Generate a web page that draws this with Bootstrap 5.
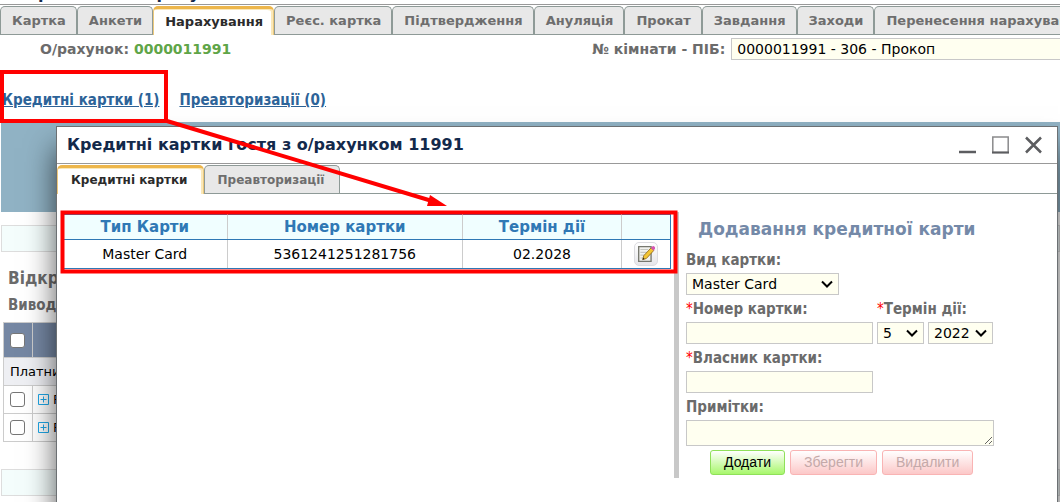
<!DOCTYPE html>
<html lang="uk">
<head>
<meta charset="utf-8">
<meta name="viewport" content="width=device-width, initial-scale=1">
<title>Кредитні картки гостя</title>
<link rel="stylesheet" href="https://cdn.jsdelivr.net/npm/bootstrap@5.3.0/dist/css/bootstrap.min.css">
<style>
  body { font-family: "DejaVu Sans", sans-serif; font-size: 12px; line-height: 16px; color: #000; background: #fff; overflow: hidden; min-height: 100vh; position: relative; }
  .strong-label { font-size: 15px; line-height: 18px; font-weight: 700; color: #6b6b6b; font-family: "DejaVu Sans Condensed", "DejaVu Sans", sans-serif; }
  .page-head { height: 5px; overflow: hidden; border-bottom: 1px solid #999; padding-left: 14px; margin-bottom: 1px; }
  .page-head h1 { font-size: 16px; line-height: 20px; font-weight: 700; color: #13294b; }
  .tabstrip { border-bottom: 1px solid #8e9a97; height: 29px; }
  .tabstrip a { flex: none; height: 28px; line-height: 28px; padding: 0 10px 0 11px; font-weight: 700; font-size: 13px; color: #6e6e6e; text-decoration: none; white-space: nowrap; background: #e8e8e8; border: 1px solid #8e9a97; border-bottom: 0; border-radius: 5px 5px 0 0; }
  .tabstrip a.active { height: 29px; background: #fff; color: #2b2b2b; border: 1px solid #ecc97c; border-top: 3px solid #edb64b; border-bottom: 0; line-height: 25px; box-shadow: inset -2px 1px 0 #fbe8b8; }
  .dialog .tabstrip a { font-size: 12px; padding: 0 15px 0 13px; }
  .fld { display: block; font-size: 14px; line-height: 20px; height: 22px; padding: 0 5px; border: 1px solid #c8c8c8; border-radius: 0; background-color: #fffff0; color: #000; }
  select.fld { appearance: none; background-image: url("data:image/svg+xml,%3Csvg xmlns='http://www.w3.org/2000/svg' viewBox='0 0 12 8'%3E%3Cpath d='M1 1.5l5 5 5-5' fill='none' stroke='%23000' stroke-width='2'/%3E%3C/svg%3E"); background-repeat: no-repeat; background-position: right 5px center; background-size: 12px 8px; }
  .account-row { height: 30px; padding: 3px 0 0 40px; }
  .account-row .strong-label { font-family: "DejaVu Sans", sans-serif; font-size: 14px; line-height: 22px; }
  .account-row b { color: #5fa548; }
  .room-group { flex: 0 0 468px; gap: 6px; }
  .room-group select.fld { background-image: none; border-right: 0; }
  .link-row { height: 57px; padding: 26px 0 0 2px; gap: 20px; }
  .link-row a { color: #2d6398; }
  .blue-band { height: 90px; background: #90b2c4; margin: 0 0 13px 1px; }
  .pale-box { height: 27px; border: 1px solid #ddd; background: #f4fdfc; margin-left: 1px; }
  .section-title { font-size: 17px; line-height: 20px; }
  .acct-table { border-collapse: collapse; margin: 8px 0 27px 3px; width: 400px; font-size: 13px; }
  .acct-table th, .acct-table td { border: 1px solid #ccc; height: 28px; padding: 0 5px 0 6px; }
  .acct-table td + td, .acct-table th + th { padding-left: 5px; }
  .acct-table thead th { height: 35px; background: #7587a3; }
  .acct-table .payer { background: #eeeff3; }
  .acct-table .tick-col { width: 29px; }
  .form-check-input[type=checkbox] { width: 15px; height: 15px; border: 1px solid #767676; border-radius: 3px; margin: 0; display: block; }
  .expand { width: 11px; height: 11px; padding: 0; border: 0; background: none; display: block; }
  .expand svg, .win-btn svg, .edit-btn svg { display: block; }
  .dialog { position: absolute; top: 126px; left: 56px; right: 2px; bottom: -20px; background: #fff; border: 1px solid #6c7073; box-shadow: 0 22px 28px rgba(0,0,0,.65); }
  .dialog-head { height: 37px; padding: 0 15px 0 10px; border-bottom: 1px solid #999; margin-bottom: 1px; }
  .dialog-head h2 { font-size: 16px; line-height: 20px; font-weight: 700; color: #13294b; }
  .win-btn { padding: 0; border: 0; background: none; }
  .dialog-body { padding: 18px 0 0 6px; }
  .cards-pane { flex: 0 0 611px; min-width: 0; padding: 2px 3px 0 0; }
  .cards-table { border-collapse: collapse; table-layout: fixed; width: 100%; border: 1px solid #2f78b5; border-left: 0; text-align: center; }
  .cards-table th { background: #f0feff; color: #2f78b5; font-size: 15px; height: 25px; padding: 0; }
  .cards-table td { height: 29px; font-size: 14px; padding: 0; }
  .cards-table th, .cards-table td { border-right: 1px solid #ccc; border-bottom: 1px solid #2f78b5; }
  .cards-table th:last-child, .cards-table td:last-child { border-right-color: #2f78b5; }
  .col-type { width: 164px; } .col-date { width: 159px; } .col-edit { width: 49px; }
  .edit-btn { width: 24px; height: 24px; padding: 2px; border: 1px solid #dcdce0; border-radius: 5px; background: linear-gradient(#fff, #e6e6ea); display: block; }
  .form-pane { height: 266px; border-left: 5px solid #c8c8c8; padding: 6px 0 0 7px; width: 320px; }
  .form-pane h3 { font-size: 17px; line-height: 22px; font-weight: 700; color: #7489a8; padding-left: 12px; margin-bottom: 11px; white-space: nowrap; }
  .form-pane label { display: block; margin-bottom: 4px; white-space: nowrap; }
  .form-pane label i { color: #f00; font-style: normal; font-weight: 400; }
  .form-stack { gap: 5px; }
  .kind { width: 153px; }
  .wide { width: 187px; flex: none; }
  .month { width: 47px; }
  .year { width: 65px; }
  textarea.fld { width: 100%; height: 26px; resize: both; overflow: hidden; }
  .acts { padding-left: 24px; gap: 5px; margin-top: 4px; }
  .act { height: 25px; font: 14px/23px "Liberation Sans", sans-serif; padding: 0 13px; border-radius: 3px; }
  .act-go { border: 1px solid #8fe05a; background: linear-gradient(#fff, #a8f76c); color: #000; }
  .act-off { border: 1px solid #f9b4b4; background: linear-gradient(#fff, #fcc8c8); color: #c4a9a9; }
  .marks { position: absolute; left: 0; top: 0; width: 700px; height: 300px; pointer-events: none; }
</style>
</head>
<body>
<header class="page-head d-flex align-items-end"><h1 class="m-0">Картка гостя о/рахунок</h1></header>
<nav class="tabstrip d-flex">
  <a href="#">Картка</a><a href="#">Анкети</a><a href="#" class="active">Нарахування</a><a href="#">Реєс. картка</a><a href="#">Підтвердження</a><a href="#">Ануляція</a><a href="#">Прокат</a><a href="#">Завдання</a><a href="#">Заходи</a><a href="#">Перенесення нарахувань</a>
</nav>
<main>
  <div class="account-row d-flex justify-content-between">
    <div class="strong-label">О/рахунок: <b>0000011991</b></div>
    <div class="room-group d-flex align-items-start">
      <label for="room" class="strong-label text-nowrap">№ кімнати - ПІБ:</label>
      <select id="room" class="fld flex-grow-1"><option>0000011991 - 306 - Прокоп</option></select>
    </div>
  </div>
  <div class="link-row d-flex strong-label"><a href="#">Кредитні картки (1)</a><a href="#">Преавторизації (0)</a></div>
  <div class="blue-band"></div>
  <div class="pale-box"></div>
  <div class="strong-label section-title ms-2 mt-3">Відкриті рахунки</div>
  <div class="strong-label ms-2 mt-2">Виводити</div>
  <table class="acct-table">
    <thead><tr><th class="tick-col"><input class="form-check-input" type="checkbox" aria-label="Усі рахунки"></th><th></th></tr></thead>
    <tbody>
      <tr><td colspan="2" class="payer">Платник</td></tr>
      <tr><td><input class="form-check-input" type="checkbox" aria-label="Рахунок 1"></td><td><div class="d-flex align-items-center gap-1"><button class="expand" type="button" aria-label="Розгорнути"><svg width="11" height="11"><path d="M.5.5h10v10H.5zM2.500 5.500h6M5.500 2.500v6" fill="none" stroke="#1fa8e8"/></svg></button>Р</div></td></tr>
      <tr><td><input class="form-check-input" type="checkbox" aria-label="Рахунок 2"></td><td><div class="d-flex align-items-center gap-1"><button class="expand" type="button" aria-label="Розгорнути"><svg width="11" height="11"><path d="M.5.5h10v10H.5zM2.500 5.500h6M5.500 2.500v6" fill="none" stroke="#1fa8e8"/></svg></button>Р</div></td></tr>
    </tbody>
  </table>
  <div class="pale-box"></div>
</main>

<section class="dialog">
  <div class="dialog-head d-flex align-items-center justify-content-between">
    <h2 class="m-0">Кредитні картки гостя з о/рахунком 11991</h2>
    <div class="d-flex gap-3">
      <button class="win-btn" type="button" aria-label="Згорнути"><svg width="17" height="18"><path d="M0 16h17" stroke="#5c5d60" stroke-width="2.500"/></svg></button>
      <button class="win-btn" type="button" aria-label="Розгорнути вікно"><svg width="17" height="18"><path d="M.8 1h15.400v15.500H.8z" fill="none" stroke="#8a8a8c" stroke-width="1.500"/><path d="M0 16.500h17" stroke="#5c5d60" stroke-width="2"/></svg></button>
      <button class="win-btn" type="button" aria-label="Закрити"><svg width="17" height="18"><path d="M1 1.500l15 15M16 1.500l-15 15" stroke="#5c5d60" stroke-width="2.500"/></svg></button>
    </div>
  </div>
  <nav class="tabstrip d-flex"><a href="#" class="active">Кредитні картки</a><a href="#">Преавторизації</a></nav>
  <div class="dialog-body d-flex">
    <div class="cards-pane">
      <table class="cards-table">
        <thead><tr><th class="col-type">Тип Карти</th><th>Номер картки</th><th class="col-date">Термін дії</th><th class="col-edit"></th></tr></thead>
        <tbody><tr><td>Master Card</td><td>5361241251281756</td><td>02.2028</td>
          <td><button class="edit-btn mx-auto" type="button" aria-label="Редагувати"><svg width="18" height="18" viewBox="0 0 16 16"><path d="M1.500 1.500h11v13h-11z" fill="#f2f2ee" stroke="#77786f" stroke-width="1.200"/><path d="M3 4h7M3 6.500h6M3 9h4M3 11.500h3" stroke="#c6c8c2"/><path d="M5 13l1-3.500L12.500 2.500l2.500 2.300L8.300 12z" fill="#f3c534" stroke="#8a6414" stroke-width=".7"/><path d="M12.300 2.600l1.200-1.300q1.200-.8 2.100.3t.2 2L14.800 5z" fill="#d557b0"/><path d="M5 13l.5-1.800 1.200 1.200z" fill="#222"/></svg></button></td></tr></tbody>
      </table>
    </div>
    <form class="form-pane">
      <h3>Додавання кредитної карти</h3>
      <div class="form-stack d-flex flex-column">
        <div><label class="strong-label" for="kind">Вид картки:</label><select id="kind" class="fld kind"><option>Master Card</option></select></div>
        <div class="d-flex">
          <div class="wide"><label class="strong-label" for="num"><i>*</i>Номер картки:</label><input id="num" type="text" class="fld w-100"></div>
          <div class="ps-1 flex-shrink-0"><label class="strong-label" for="month"><i>*</i>Термін дії:</label>
            <div class="d-flex gap-1"><select id="month" class="fld month"><option>5</option></select><select class="fld year" aria-label="Рік"><option>2022</option></select></div></div>
        </div>
        <div><label class="strong-label" for="owner"><i>*</i>Власник картки:</label><input id="owner" type="text" class="fld wide"></div>
        <div><label class="strong-label" for="notes">Примітки:</label><textarea id="notes" class="fld"></textarea></div>
      </div>
      <div class="acts d-flex"><button type="button" class="act act-go">Додати</button><button type="button" class="act act-off" disabled>Зберегти</button><button type="button" class="act act-off" disabled>Видалити</button></div>
    </form>
  </div>
</section>

<svg class="marks" viewBox="0 0 700 300" aria-hidden="true">
  <g fill="none" stroke="#f00" stroke-width="4">
    <path d="M2 72h164v49H2zM167 121L432 201"/>
    <path d="M62.500 212.500h613v59h-613z"/>
  </g>
  <path d="M447 206l-17-11-3 11z" fill="#f00"/>
</svg>
<script src="https://cdn.jsdelivr.net/npm/bootstrap@5.3.0/dist/js/bootstrap.bundle.min.js"></script>
</body>
</html>
